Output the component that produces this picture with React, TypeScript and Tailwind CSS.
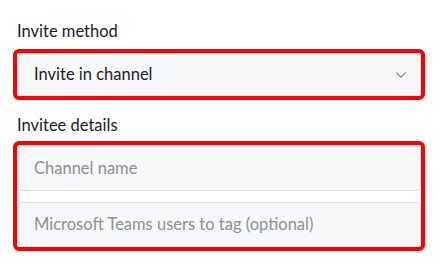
import { ChevronDown } from "lucide-react";

function Field({ placeholder, height }: { placeholder: string; height: string }) {
  return (
    <div
      className={`flex ${height} items-center rounded-[4px] border border-[#dfe1e5] bg-[#f7f8fa] px-4 text-[16.5px] text-[#8c9097]`}
    >
      {placeholder}
    </div>
  );
}

export default function App() {
  return (
    <div
      className="h-[263px] w-[439px] bg-white pt-5 pr-[14px] pl-[13px] text-[#1d1c1d]"
      style={{ fontFamily: "Lato, 'Noto Sans', sans-serif" }}
    >
      {/* Invite method */}
      <div className="pl-1 text-[16.5px] leading-[23px]">Invite method</div>
      <div className="mt-[6px] rounded-[6px] border-4 border-[#ff0000]">
        <div className="flex h-[43px] items-center justify-between rounded-[4px] border border-[#dfe1e5] bg-[#f7f8fa] pr-[10px] pl-4 text-[16.5px]">
          <span>Invite in channel</span>
          <ChevronDown size={18} strokeWidth={1.5} className="text-[#8c9097]" />
        </div>
      </div>

      {/* Invitee details */}
      <div className="mt-[14px] pl-1 text-[16.5px] leading-[23px]">Invitee details</div>
      <div className="mt-[4px] flex flex-col gap-[11px] rounded-[6px] border-4 border-[#ff0000] bg-white">
        <Field placeholder="Channel name" height="h-[46px]" />
        <Field placeholder="Microsoft Teams users to tag (optional)" height="h-[45px]" />
      </div>
    </div>
  );
}
